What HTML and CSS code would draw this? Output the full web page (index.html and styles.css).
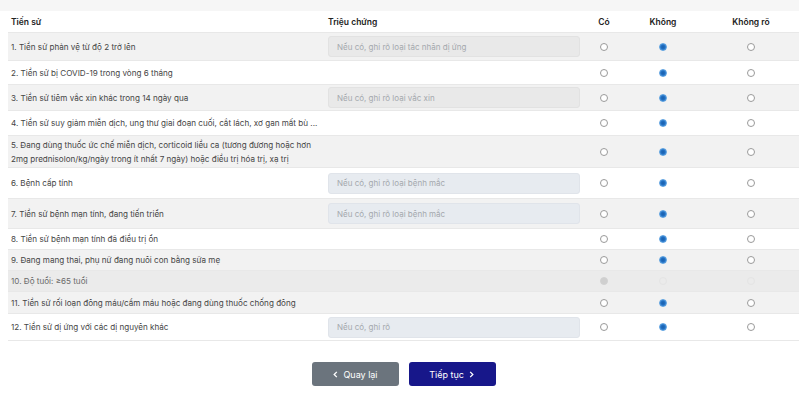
FILE: index.html
```html
<!DOCTYPE html>
<html lang="vi">
<head>
    <meta charset="UTF-8">
    <meta name="viewport" content="width=device-width, initial-scale=1.0">
    <title>Sàng lọc tiền sử</title>
    <link rel="stylesheet" href="styles.css">
</head>
<body>
    <div class="topbar"></div>
    <div class="table">
        <div class="row head">
            <div class="cell">Tiến sử</div>
            <div class="cell">Triệu chứng</div>
            <div class="cell c">Có</div>
            <div class="cell c">Không</div>
            <div class="cell c">Không rõ</div>
        </div>

        <div class="row odd h28">
            <div class="cell">1. Tiền sử phản vệ từ độ 2 trở lên</div>
            <div class="cell"><input class="note" placeholder="Nếu có, ghi rõ loại tác nhân dị ứng"></div>
            <div class="cell c"><input type="radio" name="q1"></div>
            <div class="cell c"><input type="radio" name="q1" checked></div>
            <div class="cell c"><input type="radio" name="q1"></div>
        </div>

        <div class="row h24">
            <div class="cell">2. Tiền sử bị COVID-19 trong vòng 6 tháng</div>
            <div class="cell"></div>
            <div class="cell c"><input type="radio" name="q2"></div>
            <div class="cell c"><input type="radio" name="q2" checked></div>
            <div class="cell c"><input type="radio" name="q2"></div>
        </div>

        <div class="row odd h26">
            <div class="cell">3. Tiền sử tiêm vắc xin khác trong 14 ngày qua</div>
            <div class="cell"><input class="note" placeholder="Nếu có, ghi rõ loại vắc xin"></div>
            <div class="cell c"><input type="radio" name="q3"></div>
            <div class="cell c"><input type="radio" name="q3" checked></div>
            <div class="cell c"><input type="radio" name="q3"></div>
        </div>

        <div class="row h25">
            <div class="cell nowrap">4. Tiền sử suy giảm miễn dịch, ung thư giai đoạn cuối, cắt lách, xơ gan mất bù ...</div>
            <div class="cell"></div>
            <div class="cell c"><input type="radio" name="q4"></div>
            <div class="cell c"><input type="radio" name="q4" checked></div>
            <div class="cell c"><input type="radio" name="q4"></div>
        </div>

        <div class="row odd h32">
            <div class="cell">5. Đang dùng thuốc ức chế miễn dịch, corticoid liều ca (tương đương hoặc hơn 2mg prednisolon/kg/ngày trong ít nhất 7 ngày) hoặc điều trị hóa trị, xạ trị</div>
            <div class="cell"></div>
            <div class="cell c"><input type="radio" name="q5"></div>
            <div class="cell c"><input type="radio" name="q5" checked></div>
            <div class="cell c"><input type="radio" name="q5"></div>
        </div>

        <div class="row h31">
            <div class="cell">6. Bệnh cấp tính</div>
            <div class="cell"><input class="note blue" placeholder="Nếu có, ghi rõ loại bệnh mắc"></div>
            <div class="cell c"><input type="radio" name="q6"></div>
            <div class="cell c"><input type="radio" name="q6" checked></div>
            <div class="cell c"><input type="radio" name="q6"></div>
        </div>

        <div class="row odd h30">
            <div class="cell">7. Tiền sử bệnh mạn tính, đang tiến triển</div>
            <div class="cell"><input class="note blue" placeholder="Nếu có, ghi rõ loại bệnh mắc"></div>
            <div class="cell c"><input type="radio" name="q7"></div>
            <div class="cell c"><input type="radio" name="q7" checked></div>
            <div class="cell c"><input type="radio" name="q7"></div>
        </div>

        <div class="row">
            <div class="cell">8. Tiền sử bệnh mạn tính đã điều trị ổn</div>
            <div class="cell"></div>
            <div class="cell c"><input type="radio" name="q8"></div>
            <div class="cell c"><input type="radio" name="q8" checked></div>
            <div class="cell c"><input type="radio" name="q8"></div>
        </div>

        <div class="row odd">
            <div class="cell">9. Đang mang thai, phụ nữ đang nuôi con bằng sữa mẹ</div>
            <div class="cell"></div>
            <div class="cell c"><input type="radio" name="q9"></div>
            <div class="cell c"><input type="radio" name="q9" checked></div>
            <div class="cell c"><input type="radio" name="q9"></div>
        </div>

        <div class="row disabled">
            <div class="cell">10. Độ tuổi: ≥65 tuổi</div>
            <div class="cell"></div>
            <div class="cell c"><input type="radio" name="q10" checked disabled></div>
            <div class="cell c"><input type="radio" name="q10" disabled></div>
            <div class="cell c"><input type="radio" name="q10" disabled></div>
        </div>

        <div class="row odd h22">
            <div class="cell">11. Tiền sử rối loạn đông máu/cầm máu hoặc đang dùng thuốc chống đông</div>
            <div class="cell"></div>
            <div class="cell c"><input type="radio" name="q11"></div>
            <div class="cell c"><input type="radio" name="q11" checked></div>
            <div class="cell c"><input type="radio" name="q11"></div>
        </div>

        <div class="row h27">
            <div class="cell">12. Tiền sử dị ứng với các dị nguyên khác</div>
            <div class="cell"><input class="note blue" placeholder="Nếu có, ghi rõ"></div>
            <div class="cell c"><input type="radio" name="q12"></div>
            <div class="cell c"><input type="radio" name="q12" checked></div>
            <div class="cell c"><input type="radio" name="q12"></div>
        </div>
    </div>

    <div class="actions">
        <button class="btn back">
            <svg width="7" height="7" viewBox="0 0 8 8"><path d="M5.5 1 2.5 4l3 3" fill="none" stroke="#fff" stroke-width="1.5"/></svg>
            Quay lại
        </button>
        <button class="btn next">
            Tiếp tục
            <svg width="7" height="7" viewBox="0 0 8 8"><path d="M2.5 1l3 3-3 3" fill="none" stroke="#fff" stroke-width="1.5"/></svg>
        </button>
    </div>
</body>
</html>
```

FILE: styles.css
```css
body {
    margin: 0;
    font-family: Inter, "Noto Sans", sans-serif;
    font-size: 8.1px;
    color: #454545;
    background-color: #fff;
}
.topbar {
    height: 11px;
    background-color: #f6f6f6;
}
.table {
    margin-left: 8px;
}
.row {
    box-sizing: border-box;
    display: grid;
    grid-template-columns: 317px 260px 38px 80px 96px;
    align-items: center;
    min-height: 21px;
    border-bottom: 1px solid #e8e8e8;
}
.row.odd {
    background-color: #f2f2f2;
}
.row.head {
    font-weight: 600;
    font-size: 8.5px;
    color: #222;
    min-height: 22px;
}
.row.disabled {
    background-color: #ebebeb;
    color: #6a6a6a;
}
.h22 { min-height: 22px; }
.h24 { min-height: 24px; }
.h25 { min-height: 25px; }
.h26 { min-height: 26px; }
.h27 { min-height: 27px; }
.h28 { min-height: 28px; }
.h30 { min-height: 30px; }
.h31 { min-height: 31px; }
.h32 { min-height: 32px; }
.cell {
    padding: 0 3px;
    line-height: 14px;
}
.cell.nowrap {
    white-space: nowrap;
}
.cell.c {
    text-align: center;
    display: flex;
    justify-content: center;
}
.note {
    display: block;
    box-sizing: border-box;
    width: 252px;
    height: 21px;
    padding: 0 8px;
    border: 1px solid #e2e2e2;
    border-radius: 3px;
    background-color: #e9e9e9;
    font-family: inherit;
    font-size: 8px;
    color: #444;
}
.note.blue {
    background-color: #e7ebf0;
    border-color: #e0e4ea;
}
.note::placeholder {
    color: #a4a8ad;
}
input[type="radio"] {
    appearance: none;
    -webkit-appearance: none;
    margin: 0;
    width: 8px;
    height: 8px;
    border: 1px solid #9a9a9a;
    border-radius: 50%;
    background-color: #fff;
}
input[type="radio"]:checked {
    border-color: #5aa0e0;
    background: radial-gradient(circle, #1b5fa8 0, #1f6cc0 40%, #4c97dd 100%);
}
input[type="radio"]:disabled {
    border-color: #e4e4e4;
    background: #ebebeb;
}
input[type="radio"]:checked:disabled {
    border-color: #d2d2d2;
    background: #cfcfcf;
}
.actions {
    display: flex;
    justify-content: center;
    gap: 10px;
    margin: 21px 0 0 8px;
}
.btn {
    display: flex;
    align-items: center;
    justify-content: center;
    gap: 4px;
    width: 87px;
    height: 24px;
    border: none;
    border-radius: 3px;
    font-family: inherit;
    font-size: 9px;
    font-weight: 400;
    color: #fff;
    cursor: pointer;
}
.btn.back {
    background-color: #6b747d;
}
.btn.next {
    background-color: #17178a;
}
```
